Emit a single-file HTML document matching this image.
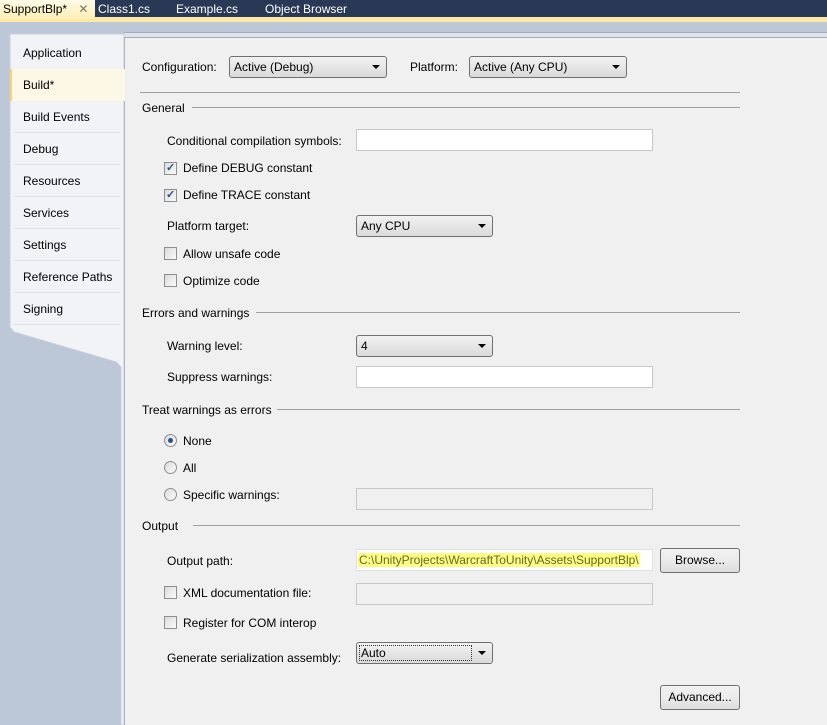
<!DOCTYPE html>
<html><head><meta charset="utf-8"><style>
*{box-sizing:border-box;margin:0;padding:0}
body{width:827px;height:725px;overflow:hidden;background:#bcc7d8;font-family:"Liberation Sans",sans-serif;font-size:12px;color:#000;position:relative}
.a{position:absolute;white-space:nowrap}
.t{position:absolute;line-height:14px}
.sel{position:absolute;height:22px;border:1px solid #707070;border-radius:3px;background:linear-gradient(#f2f2f2,#e6e6e6 50%,#dadada);padding:3px 4px;line-height:14px}
.sel:after{content:"";position:absolute;right:6px;top:8px;border-left:4px solid transparent;border-right:4px solid transparent;border-top:4px solid #000}
.inp{position:absolute;height:22px;border:1px solid #c8c8c8;background:#fff}
.dis{background:#f0f0f0;border-color:#c8c8c8}
.cb{position:absolute;width:13px;height:13px;border:1px solid #8e8f8f;background:linear-gradient(135deg,#dcdcdc,#fafafa)}
.rd{position:absolute;width:13px;height:13px;border:1px solid #8e8f8f;border-radius:50%;background:linear-gradient(135deg,#dcdcdc,#fafafa)}
.hr{position:absolute;height:1px;background:#a0a0a0}
.btn{position:absolute;width:80px;height:25px;border:1px solid #707070;border-radius:3px;background:linear-gradient(#f2f2f2,#ebebeb 50%,#dddddd);text-align:center;line-height:23px}
.tab{position:absolute;left:23px;line-height:14px}
.sep{position:absolute;left:14px;width:106px;height:1px;background:#dde1e8}
</style></head><body>
<div class="a" style="left:0;top:0;width:827px;height:17px;background:#293955"></div>
<div class="a" style="left:0;top:17px;width:827px;height:5px;background:#ffe8a6"></div>
<div class="a" style="left:0;top:0;width:95px;height:19px;background:linear-gradient(#fffbe6,#fdf0b4)"></div>
<div class="a" style="left:3px;top:2px;line-height:14px">SupportBlp* <span style="color:#7a7a6a;margin-left:8px">✕</span></div>
<div class="a" style="left:98px;top:2px;color:#fff;line-height:14px">Class1.cs</div>
<div class="a" style="left:176px;top:2px;color:#fff;line-height:14px">Example.cs</div>
<div class="a" style="left:265px;top:2px;color:#fff;line-height:14px">Object Browser</div>
<div class="a" style="left:124px;top:32px;width:703px;height:6px;background:#dfe3ea;border-top:1px solid #a4acb8;border-bottom:1px solid #a4acb8"></div>
<svg class="a" style="left:0;top:22px" width="130" height="703"><polygon points="10,12 124,12 124,703 121,703 121,345 116,340 14,310 10,305" fill="#f2f3f6" stroke="#c9cfd9"/></svg>
<div class="a" style="left:124px;top:37px;width:703px;height:688px;background:#f0f0f0;border-left:1px solid #a9b3c3;border-top:1px solid #a4acb8"></div>
<div class="a" style="left:10px;top:69px;width:115px;height:32px;background:#fdf8e6;border-left:2px solid #f5d56b"></div>
<div class="tab" style="top:46px">Application</div>
<div class="tab" style="top:78px">Build*</div>
<div class="tab" style="top:110px">Build Events</div>
<div class="tab" style="top:142px">Debug</div>
<div class="tab" style="top:174px">Resources</div>
<div class="tab" style="top:206px">Services</div>
<div class="tab" style="top:238px">Settings</div>
<div class="tab" style="top:270px">Reference Paths</div>
<div class="tab" style="top:302px">Signing</div>
<div class="sep" style="top:132px"></div><div class="sep" style="top:164px"></div><div class="sep" style="top:196px"></div><div class="sep" style="top:228px"></div><div class="sep" style="top:260px"></div><div class="sep" style="top:292px"></div><div class="sep" style="top:324px"></div>

<div class="t" style="left:142px;top:60px">Configuration:</div>
<div class="sel" style="left:229px;top:56px;width:158px">Active (Debug)</div>
<div class="t" style="left:410px;top:60px">Platform:</div>
<div class="sel" style="left:469px;top:56px;width:158px">Active (Any CPU)</div>
<div class="hr" style="left:140px;top:92px;width:600px"></div>

<div class="t" style="left:142px;top:101px">General</div><div class="hr" style="left:192px;top:107px;width:548px"></div>
<div class="t" style="left:167px;top:134px">Conditional compilation symbols:</div>
<div class="inp" style="left:356px;top:129px;width:297px"></div>
<div class="cb" style="left:164px;top:162px"></div><div class="t" style="left:166px;top:161px;color:#2f4f8f;font-size:11px;font-weight:bold">✓</div><div class="t" style="left:183px;top:161px">Define DEBUG constant</div>
<div class="cb" style="left:164px;top:189px"></div><div class="t" style="left:166px;top:188px;color:#2f4f8f;font-size:11px;font-weight:bold">✓</div><div class="t" style="left:183px;top:188px">Define TRACE constant</div>
<div class="t" style="left:167px;top:219px">Platform target:</div>
<div class="sel" style="left:356px;top:215px;width:137px">Any CPU</div>
<div class="cb" style="left:164px;top:247px"></div><div class="t" style="left:183px;top:247px">Allow unsafe code</div>
<div class="cb" style="left:164px;top:274px"></div><div class="t" style="left:183px;top:274px">Optimize code</div>

<div class="t" style="left:142px;top:306px">Errors and warnings</div><div class="hr" style="left:256px;top:312px;width:484px"></div>
<div class="t" style="left:167px;top:339px">Warning level:</div>
<div class="sel" style="left:356px;top:335px;width:137px">4</div>
<div class="t" style="left:167px;top:370px">Suppress warnings:</div>
<div class="inp" style="left:356px;top:366px;width:297px"></div>

<div class="t" style="left:142px;top:403px">Treat warnings as errors</div><div class="hr" style="left:277px;top:409px;width:463px"></div>
<div class="rd" style="left:164px;top:434px"></div><div class="a" style="left:168px;top:438px;width:5px;height:5px;border-radius:50%;background:#2a4f8a"></div><div class="t" style="left:183px;top:434px">None</div>
<div class="rd" style="left:164px;top:461px"></div><div class="t" style="left:183px;top:461px">All</div>
<div class="rd" style="left:164px;top:488px"></div><div class="t" style="left:183px;top:488px">Specific warnings:</div>
<div class="inp dis" style="left:356px;top:488px;width:297px"></div>

<div class="t" style="left:142px;top:519px">Output</div><div class="hr" style="left:193px;top:525px;width:547px"></div>
<div class="t" style="left:167px;top:554px">Output path:</div>
<div class="inp" style="left:356px;top:549px;width:297px;border-color:#e0e0e0"></div>
<div class="t" style="left:358px;top:553px;background:#fbfb88;color:#6b6b1a;padding:0 1px">C:\UnityProjects\WarcraftToUnity\Assets\SupportBlp\</div>
<div class="btn" style="left:660px;top:548px">Browse...</div>
<div class="cb" style="left:164px;top:586px"></div><div class="t" style="left:183px;top:586px">XML documentation file:</div>
<div class="inp dis" style="left:356px;top:583px;width:297px"></div>
<div class="cb" style="left:164px;top:616px"></div><div class="t" style="left:183px;top:616px">Register for COM interop</div>
<div class="t" style="left:167px;top:651px">Generate serialization assembly:</div>
<div class="sel" style="left:356px;top:642px;width:137px">Auto<div class="a" style="left:2px;top:2px;width:113px;height:16px;border:1px dotted #333"></div></div>
<div class="btn" style="left:660px;top:685px">Advanced...</div>
</body></html>
